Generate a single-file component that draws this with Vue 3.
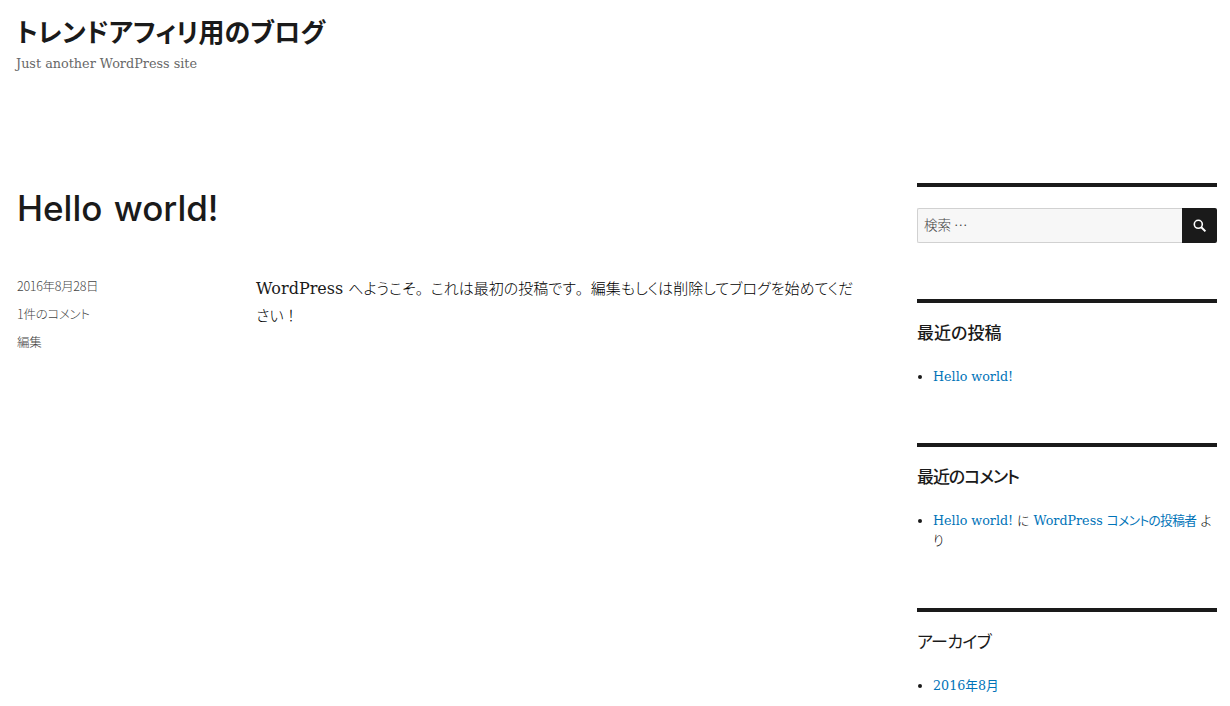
<script setup>
const meta = ['2016年8月28日', '1件のコメント', '編集']
</script>

<template>
  <div class="page">
    <header class="head">
      <h1 class="title">トレンドアフィリ用のブログ</h1>
      <p class="desc">Just another WordPress site</p>
    </header>
    <div class="cols">
      <main class="main">
        <h2 class="post-title">Hello world!</h2>
        <div class="post">
          <div class="meta">
            <div v-for="m in meta" :key="m" class="meta-item">{{ m }}</div>
          </div>
          <p class="body">WordPress <span class="ja">へようこそ<span class="fw">。</span>これは最初の投稿です<span class="fw">。</span>編集もしくは削除してブログを始めてください<span class="fw">！</span></span></p>
        </div>
      </main>
      <aside class="side">
        <section class="widget search-w">
          <form class="search" @submit.prevent>
            <input class="input" placeholder="検索 …" />
            <button class="btn" type="button" aria-label="検索">
              <svg width="16" height="16" viewBox="0 0 16 16" fill="none" stroke="#fff">
                <circle cx="6.3" cy="6.3" r="4" stroke-width="1.6" />
                <path d="M9.3 9.3 13.4 13.4" stroke-width="2" />
              </svg>
            </button>
          </form>
        </section>
        <section class="widget w-posts">
          <h3 class="w-title">最近の投稿</h3>
          <ul class="list"><li><a href="#">Hello world!</a></li></ul>
        </section>
        <section class="widget w-comments">
          <h3 class="w-title tight">最近のコメント</h3>
          <ul class="list"><li><a href="#">Hello world!</a> <span class="plain">に</span> <a href="#">WordPress <span class="tight-ja">コメントの投稿者</span></a> <span class="plain">より</span></li></ul>
        </section>
        <section class="widget w-arch">
          <h3 class="w-title thin">アーカイブ</h3>
          <ul class="list"><li><a href="#">2016年8月</a></li></ul>
        </section>
      </aside>
    </div>
  </div>
</template>

<style scoped>
.page {
  width: 1230px;
  box-sizing: border-box;
  padding: 0 13px 0 16px;
  color: #1a1a1a;
  font-family: "DejaVu Serif", "Noto Sans CJK JP", serif;
}
.head { padding-top: 13px; height: 169px; box-sizing: border-box; }
.title {
  margin: 0;
  font: 700 26px/36px "Noto Sans CJK JP", sans-serif;
}
.desc {
  margin: 2px 0 0;
  font: 400 12.8px/26px "DejaVu Serif", serif;
  color: #686868;
}
.cols { display: flex; justify-content: space-between; }
.main { width: 840px; padding-top: 14px; }
.post-title {
  margin: 0 0 0 1px;
  font: 500 35px/50px Inter, sans-serif;
  word-spacing: 2px;
}
.post { display: flex; margin-top: 39px; }
.meta { width: 240px; flex: none; padding-left: 1px; box-sizing: border-box; font: 300 12.5px/28px "Noto Sans CJK JP", sans-serif; color: #444; letter-spacing: -0.3px; }
.meta-item { height: 28px; }
.body { margin: 3px 0 0; font: 400 16px/27px "DejaVu Serif", "Noto Sans CJK JP", serif; flex: 1; }
.ja { font: 300 15px/1 "Noto Sans CJK JP", sans-serif; color: #000; letter-spacing: 0.02px; font-feature-settings: "palt"; }
.fw { font-feature-settings: normal; font-kerning: none; }
.side { width: 300px; flex: none; padding-top: 14px; }
.widget { border-top: 4px solid #1a1a1a; }
.search-w { height: 116px; padding-top: 21px; box-sizing: border-box; }
.search { display: flex; height: 35px; }
.input {
  flex: 1; min-width: 0; box-sizing: border-box;
  border: 1px solid #d1d1d1; border-right: none; border-radius: 2px 0 0 2px;
  background: #f7f7f7; padding: 0 6px 3px;
  font: 300 13.5px "Noto Sans CJK JP", sans-serif;
}
.input::placeholder { color: #444; opacity: 1; }
.btn { width: 35px; flex: none; padding: 0; border: none; border-radius: 0 2px 2px 0; background: #1a1a1a; display: flex; align-items: center; justify-content: center; }
.w-title { margin: 0; font: 500 17px/22px "Noto Sans CJK JP", sans-serif; padding-top: 18px; }
.thin { font-weight: 400; letter-spacing: -0.6px; }
.tight { letter-spacing: -1.1px; }
.list { margin: 0; padding: 0 0 0 16px; font: 400 12.7px/20px "DejaVu Serif", "Noto Sans CJK JP", serif; }
.list li { color: #1a1a1a; }
.list a { color: #0073b8; text-decoration: none; }
.plain { font-weight: 300; color: #000; }
.tight-ja { letter-spacing: -0.6px; }
.w-posts { height: 144px; box-sizing: border-box; }
.w-posts .list, .w-comments .list, .w-arch .list { margin-top: 24px; }
.w-comments { height: 165px; box-sizing: border-box; }
.title, .meta, .input, .w-title, .list { font-feature-settings: "palt"; }
</style>

<style>
body { background: #fff; }
</style>
